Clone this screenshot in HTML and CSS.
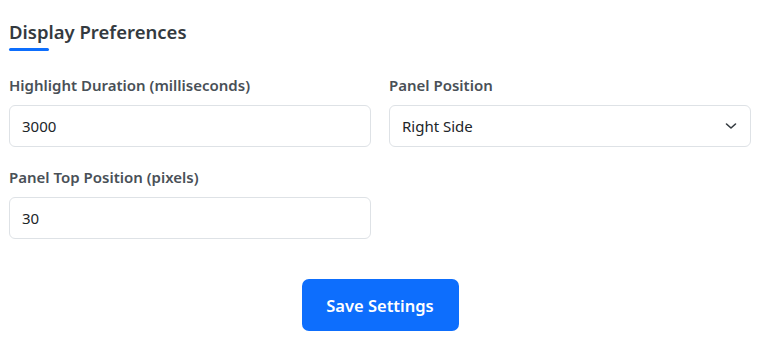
FILE: index.html
```html
<!DOCTYPE html>
<html lang="en">
<head>
<meta charset="utf-8">
<title>Display Preferences</title>
<link rel="stylesheet" href="styles.css">
</head>
<body>
<div class="settings">
  <h2 class="section-title">Display Preferences</h2>
  <div class="form-grid">
    <div class="field">
      <label class="field-label" for="duration">Highlight Duration (milliseconds)</label>
      <input class="field-input" id="duration" type="text" value="3000">
    </div>
    <div class="field">
      <label class="field-label" for="position">Panel Position</label>
      <div class="select-wrap">
        <div class="field-input select-box" id="position">Right Side</div>
        <svg class="chevron" width="12" height="8" viewBox="0 0 12 8" aria-hidden="true"><path d="M1.5 2 L6 6 L10.5 2" fill="none" stroke="#343a40" stroke-width="1.6" stroke-linecap="round" stroke-linejoin="round"/></svg>
      </div>
    </div>
    <div class="field">
      <label class="field-label" for="top">Panel Top Position (pixels)</label>
      <input class="field-input" id="top" type="text" value="30">
    </div>
  </div>
  <div class="actions">
    <button class="save-btn" type="button">Save Settings</button>
  </div>
</div>
</body>
</html>
```
FILE: styles.css
```css
* { box-sizing: border-box; }
html, body { margin: 0; padding: 0; background: #ffffff; }
body {
  font-family: "Noto Sans", "Open Sans", sans-serif;
  color: #212529;
}
.settings {
  padding: 18px 8px 0 9px;
}
.section-title {
  margin: 0 0 24px 0;
  font-size: 18.5px;
  font-weight: 600;
  color: #343a40;
  line-height: 28px;
  position: relative;
  padding-bottom: 5px;
  display: inline-block;
}
.section-title::after {
  content: "";
  position: absolute;
  left: 0;
  bottom: 0;
  width: 40px;
  height: 3px;
  border-radius: 2px;
  background: #0d6efd;
}
.form-grid {
  display: grid;
  grid-template-columns: 362px 362px;
  column-gap: 18px;
  row-gap: 20px;
}
.field {
  display: flex;
  flex-direction: column;
}
.field-label {
  font-size: 15px;
  font-weight: 600;
  color: #495057;
  line-height: 20px;
  margin-bottom: 10px;
}
.field-input {
  height: 42px;
  border: 1px solid #dee2e6;
  border-radius: 6px;
  padding: 0 12px;
  font-family: inherit;
  font-size: 15px;
  color: #212529;
  background: #fff;
  outline: none;
  width: 100%;
}
.select-wrap {
  position: relative;
}
.select-box {
  display: flex;
  align-items: center;
}
.chevron {
  position: absolute;
  right: 14px;
  top: 17px;
}
.actions {
  display: flex;
  justify-content: center;
  margin-top: 40px;
}
.save-btn {
  width: 157px;
  height: 52px;
  border: none;
  border-radius: 7px;
  background: #0d6efd;
  color: #fff;
  font-family: inherit;
  font-size: 16.5px;
  font-weight: 600;
  cursor: pointer;
}
```
